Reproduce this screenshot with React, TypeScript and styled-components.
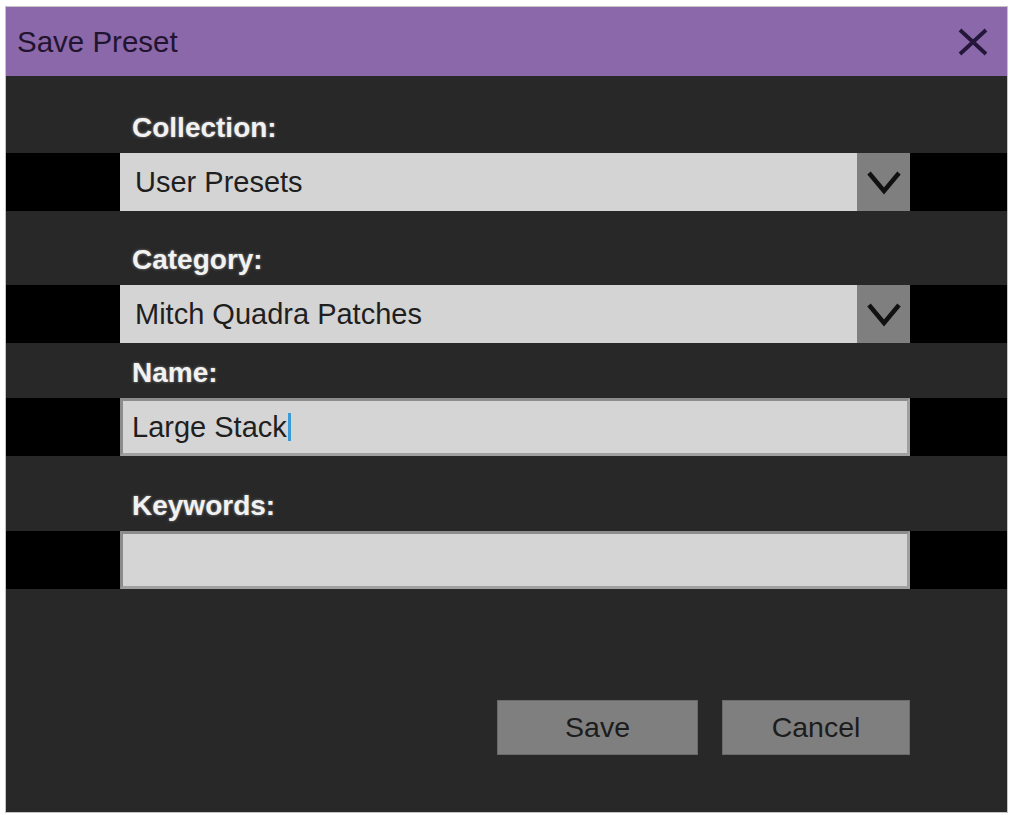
import React from 'react';
import styled, { createGlobalStyle } from 'styled-components';

const GlobalStyle = createGlobalStyle`
  html, body {
    margin: 0;
    padding: 0;
    background: #ffffff;
  }
  body {
    font-family: 'Liberation Sans', Arial, sans-serif;
  }
`;

const Page = styled.div`
  width: 1012px;
  height: 815px;
  padding: 7px 0 0 6px;
  box-sizing: border-box;
`;

const Dialog = styled.div`
  width: 1001px;
  height: 805px;
  display: flex;
  flex-direction: column;
  background: #282828;
  box-shadow: 0 0 0 1px #c4c4c4;
`;

const TitleBar = styled.div`
  height: 69px;
  flex-shrink: 0;
  display: flex;
  align-items: center;
  justify-content: space-between;
  padding: 0 17px 0 11px;
  background: #8b68a9;
`;

const Title = styled.div`
  font-size: 29.5px;
  color: #22142f;
`;

const CloseButton = styled.button`
  width: 34px;
  height: 34px;
  padding: 0;
  border: none;
  background: transparent;
  display: flex;
  align-items: center;
  justify-content: center;
  cursor: pointer;
`;

const Body = styled.div`
  flex: 1;
  display: flex;
  flex-direction: column;
  padding-top: 35px;
`;

const Label = styled.div<{ $gap: number }>`
  margin: ${(p) => p.$gap}px 0 8px 126px;
  height: 34px;
  line-height: 34px;
  font-size: 28px;
  font-weight: bold;
  color: #f2f2f2;
  text-shadow: 0 0 3px rgba(255, 255, 255, 0.45);
`;

const Band = styled.div`
  height: 58px;
  display: flex;
  background: #000000;
  padding: 0 97px 0 114px;
`;

const SelectBox = styled.div`
  flex: 1;
  display: flex;
  background: #d4d4d4;
`;

const SelectText = styled.div`
  flex: 1;
  display: flex;
  align-items: center;
  padding-left: 15px;
  font-size: 29px;
  color: #1f1f1f;
`;

const SelectArrow = styled.div`
  width: 53px;
  display: flex;
  align-items: center;
  justify-content: center;
  background: #7f7f7f;
`;

const TextField = styled.div`
  flex: 1;
  display: flex;
  align-items: center;
  padding-left: 9px;
  background: #d5d5d5;
  border: 3px solid #8c8c8c;
  border-right-color: #a0a0a0;
  border-bottom-color: #a0a0a0;
  font-size: 29px;
  color: #1f1f1f;
`;

const Caret = styled.span`
  display: inline-block;
  width: 3px;
  height: 28px;
  margin-left: 1px;
  background: #3b9bd6;
`;

const ButtonRow = styled.div`
  display: flex;
  justify-content: flex-end;
  gap: 24px;
  margin-top: 111px;
  padding-right: 97px;
`;

const Button = styled.button<{ $width: number }>`
  width: ${(p) => p.$width}px;
  height: 55px;
  background: #7f7f7f;
  border: 1px solid #6a6a6a;
  font-family: 'Liberation Sans', Arial, sans-serif;
  font-size: 28.5px;
  color: #1c1c1c;
  cursor: pointer;
`;

const Chevron = () => (
  <svg width="36" height="26" viewBox="0 0 36 26">
    <path d="M3 4 L18 22 L33 4" fill="none" stroke="#111" strokeWidth="4.5" />
  </svg>
);

const CloseIcon = () => (
  <svg width="30" height="28" viewBox="0 0 30 28">
    <path d="M2 2 L28 26 M28 2 L2 26" stroke="#24163a" strokeWidth="3.8" />
  </svg>
);

export default function App() {
  return (
    <Page>
      <GlobalStyle />
      <Dialog>
        <TitleBar>
          <Title>Save Preset</Title>
          <CloseButton aria-label="Close">
            <CloseIcon />
          </CloseButton>
        </TitleBar>
        <Body>
          <Label $gap={0}>Collection:</Label>
          <Band>
            <SelectBox>
              <SelectText>User Presets</SelectText>
              <SelectArrow>
                <Chevron />
              </SelectArrow>
            </SelectBox>
          </Band>

          <Label $gap={32}>Category:</Label>
          <Band>
            <SelectBox>
              <SelectText>Mitch Quadra Patches</SelectText>
              <SelectArrow>
                <Chevron />
              </SelectArrow>
            </SelectBox>
          </Band>

          <Label $gap={13}>Name:</Label>
          <Band>
            <TextField>
              Large Stack
              <Caret />
            </TextField>
          </Band>

          <Label $gap={33}>Keywords:</Label>
          <Band>
            <TextField />
          </Band>

          <ButtonRow>
            <Button $width={201}>Save</Button>
            <Button $width={188}>Cancel</Button>
          </ButtonRow>
        </Body>
      </Dialog>
    </Page>
  );
}
